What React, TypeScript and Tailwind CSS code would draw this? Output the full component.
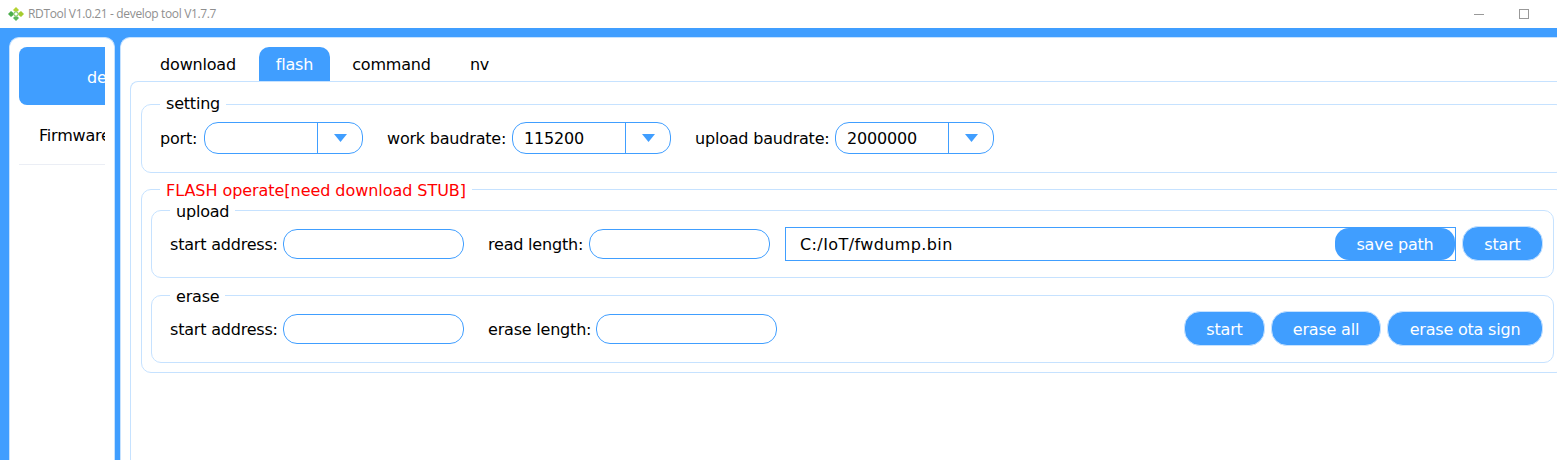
const Label = ({ text, width }: { text: string; width: string }) => (
  <span className={`${width} shrink-0 whitespace-nowrap pt-[2px]`}>{text}</span>
);

const Combo = ({ value }: { value?: string }) => (
  <div className="w-[159px] h-[32px] shrink-0 flex border border-[#409eff] rounded-[14px] bg-white">
    <div className="flex-1 pl-[11px] leading-[32px] text-black">{value}</div>
    <div className="w-[45px] border-l border-[#409eff] flex items-center justify-center">
      <svg width="13" height="8" viewBox="0 0 13 8">
        <path d="M0 0h13L6.5 8z" fill="#409eff" />
      </svg>
    </div>
  </div>
);

const TextBox = () => (
  <div className="w-[181px] h-[30px] shrink-0 border border-[#409eff] rounded-[14px] bg-white" />
);

const Btn = ({ label, width }: { label: string; width: string }) => (
  <button className={`${width} h-[35px] shrink-0 pt-[2px] rounded-[16px] bg-[#409eff] border border-[#c6e2ff] text-white`}>
    {label}
  </button>
);

const Group = ({
  title,
  className,
  titleClass,
  children,
}: {
  title: string;
  className: string;
  titleClass: string;
  children: React.ReactNode;
}) => (
  <fieldset className={`border border-[#c6e2ff] rounded-[10px] ${className}`}>
    <legend className={`px-[6px] ${titleClass}`}>{title}</legend>
    {children}
  </fieldset>
);

export default function App() {
  return (
    <div className="w-[1557px] h-[460px] overflow-hidden flex flex-col bg-white text-[16px] tracking-[-0.2px] text-black font-['DejaVu_Sans',sans-serif]">
      <div className="h-[28px] shrink-0 bg-white flex items-center pl-[8px]">
        <svg width="16" height="14" viewBox="0 0 16 14">
          <path d="M8 0l3 3-1.5 1.5h-3L5 3z" fill="#b5d334" />
          <path d="M5 11l1.5-1.5h3L11 11l-3 3z" fill="#5cb85c" />
          <path d="M3 4l2.5 2v2L3 10 0 7z" fill="#4cae4c" />
          <path d="M13 4l3 3-3 3-2.5-2V6z" fill="#a6cc2e" />
          <circle cx="8" cy="7" r="2.2" fill="#fff" stroke="#6cc04a" strokeWidth="1" />
        </svg>
        <span className="ml-[4px] text-[12px] tracking-[-0.35px] text-[#8f8f8f] font-['Open_Sans',sans-serif]">
          RDTool V1.0.21 - develop tool V1.7.7
        </span>
        <div className="ml-auto flex items-center">
          <div className="w-[10px] h-px bg-[#999]" />
          <div className="ml-[35px] mr-[28px] w-[10px] h-[10px] border border-[#999]" />
        </div>
      </div>

      <div className="flex-1 min-h-0 bg-[#409eff] flex pt-[9px] pl-[9px] gap-[5px]">
        <div className="w-[106px] shrink-0 bg-white border border-[#c6e2ff] border-b-0 rounded-t-[10px] pt-[9px] px-[9px]">
          <div className="h-[58px] bg-[#409eff] rounded-l-[8px] overflow-hidden text-white flex items-center pl-[68px] pt-[3px] whitespace-nowrap">
            develop
          </div>
          <div className="h-[60px] border-b border-[#ebeef5] overflow-hidden flex items-center pl-[20px] pt-[3px] whitespace-nowrap">
            Firmware
          </div>
        </div>

        <div className="flex-1 min-w-0 bg-white border-t border-l border-[#c6e2ff] rounded-tl-[10px] pt-[9px] pl-[9px] overflow-hidden">
          <div className="flex h-[34px] pl-[22px]">
            <div className="w-[92px] pt-[2px] flex items-center justify-center">download</div>
            <div className="w-[71px] pt-[2px] ml-[15px] flex items-center justify-center bg-[#409eff] text-white rounded-t-[10px]">flash</div>
            <div className="w-[99px] pt-[2px] ml-[12px] flex items-center justify-center">command</div>
            <div className="w-[59px] pt-[2px] ml-[9px] flex items-center justify-center">nv</div>
          </div>

          <div className="w-[1460px] h-[400px] border-t border-l border-[#c6e2ff] rounded-tl-[8px] pl-[10px] pt-[12px]">
            <Group title="setting" titleClass="leading-[20px]" className="w-[1425px] h-[79px] pl-[18px] pt-[8px]">
              <div className="flex items-center">
                <Label text="port:" width="w-[44px]" />
                <Combo />
                <div className="w-[24px] shrink-0" />
                <Label text="work baudrate:" width="w-[125px]" />
                <Combo value="115200" />
                <div className="w-[24px] shrink-0" />
                <Label text="upload baudrate:" width="w-[140px]" />
                <Combo value="2000000" />
              </div>
            </Group>

            <Group
              title="FLASH operate[need download STUB]"
              titleClass="text-[#ff0000] ml-[9px] leading-[16px] pt-[4px] tracking-[-0.05px]"
              className="w-[1425px] h-[194px] mt-[6px] pl-[9px]"
            >
              <Group title="upload" titleClass="leading-[20px] pt-[3px]" className="w-[1403px] h-[79px] pl-[18px]">
                <div className="flex items-center w-[1373px] h-[35px] mt-[4px]">
                  <Label text="start address:" width="w-[113px]" />
                  <TextBox />
                  <div className="w-[24px] shrink-0" />
                  <Label text="read length:" width="w-[101px]" />
                  <TextBox />
                  <div className="ml-[15px] mr-[6px] w-[671px] h-[34px] shrink-0 border border-[#409eff] flex items-center justify-between pl-[14px]">
                    <span className="pt-[2px] tracking-[0.4px]">C:/IoT/fwdump.bin</span>
                    <button className="w-[120px] h-[32px] pt-[2px] rounded-[14px] bg-[#409eff] text-white">save path</button>
                  </div>
                  <Btn label="start" width="w-[81px]" />
                </div>
              </Group>

              <Group title="erase" titleClass="leading-[20px] pt-[3px]" className="w-[1403px] h-[79px] pl-[18px] mt-[6px]">
                <div className="flex items-center w-[1373px] h-[35px] mt-[4px]">
                  <Label text="start address:" width="w-[113px]" />
                  <TextBox />
                  <div className="w-[24px] shrink-0" />
                  <Label text="erase length:" width="w-[108px]" />
                  <TextBox />
                  <div className="ml-auto flex gap-[6px]">
                    <Btn label="start" width="w-[81px]" />
                    <Btn label="erase all" width="w-[110px]" />
                    <Btn label="erase ota sign" width="w-[156px]" />
                  </div>
                </div>
              </Group>
            </Group>
          </div>
        </div>
      </div>
    </div>
  );
}
